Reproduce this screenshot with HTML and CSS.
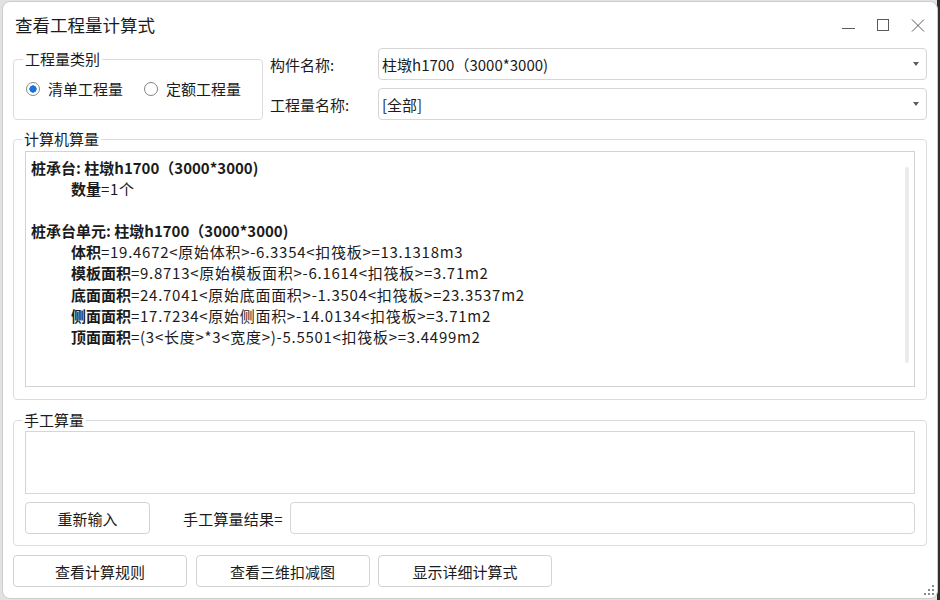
FILE: index.html
```html
<!DOCTYPE html>
<html lang="zh-CN">
<head>
  <meta charset="UTF-8" />
  <title>查看工程量计算式</title>
  <link rel="stylesheet" href="styles.css">
</head>
<body>

<div class="window">
  <div class="titlebar">
    <div class="title">查看工程量计算式</div>
    <div class="controls">
      <span class="ctl">
        <svg width="14" height="14" viewBox="0 0 14 14"><path d="M1 9.5H14" /></svg>
      </span>
      <span class="ctl">
        <svg width="14" height="14" viewBox="0 0 14 14"><rect x="1.5" y="0.5" width="11" height="11" /></svg>
      </span>
      <span class="ctl">
        <svg width="14" height="14" viewBox="0 0 14 14"><path d="M1 0.5L13 12.5M13 0.5L1 12.5" /></svg>
      </span>
    </div>
  </div>

  <div class="content">
    <div class="top-row">
      <fieldset class="group type-group">
        <legend>工程量类别</legend>
        <label class="radio"><input type="radio" name="kind" checked /><span>清单工程量</span></label>
        <label class="radio"><input type="radio" name="kind" /><span>定额工程量</span></label>
      </fieldset>
      <div class="fields">
        <div class="field">
          <span class="field-label">构件名称:</span>
          <div class="combo">
            <span>柱墩h1700（3000*3000)</span>
            <svg width="6" height="4" viewBox="0 0 6 4"><path d="M0 0H6L3 4Z" /></svg>
          </div>
        </div>
        <div class="field">
          <span class="field-label">工程量名称:</span>
          <div class="combo">
            <span>[全部]</span>
            <svg width="6" height="4" viewBox="0 0 6 4"><path d="M0 0H6L3 4Z" /></svg>
          </div>
        </div>
      </div>
    </div>

    <fieldset class="group calc-group">
      <legend>计算机算量</legend>
      <div class="result-box">
        <div class="result-text">
          <div class="line strong">桩承台: 柱墩h1700（3000*3000)</div>
          <div class="line sub"><b>数量</b>=1个</div>
          <div class="line">&nbsp;</div>
          <div class="line strong">桩承台单元: 柱墩h1700（3000*3000)</div>
          <div class="line sub"><b>体积</b>=19.4672&lt;原始体积&gt;-6.3354&lt;扣筏板&gt;=13.1318m3</div>
          <div class="line sub"><b>模板面积</b>=9.8713&lt;原始模板面积&gt;-6.1614&lt;扣筏板&gt;=3.71m2</div>
          <div class="line sub"><b>底面面积</b>=24.7041&lt;原始底面面积&gt;-1.3504&lt;扣筏板&gt;=23.3537m2</div>
          <div class="line sub"><b>侧面面积</b>=17.7234&lt;原始侧面积&gt;-14.0134&lt;扣筏板&gt;=3.71m2</div>
          <div class="line sub"><b>顶面面积</b>=(3&lt;长度&gt;*3&lt;宽度&gt;)-5.5501&lt;扣筏板&gt;=3.4499m2</div>
        </div>
        <div class="scroll-thumb"></div>
      </div>
    </fieldset>

    <fieldset class="group manual-group">
      <legend>手工算量</legend>
      <textarea class="manual-input"></textarea>
      <div class="manual-row">
        <button class="btn reinput">重新输入</button>
        <span class="result-label">手工算量结果=</span>
        <input class="result-input" type="text" />
      </div>
    </fieldset>

    <div class="bottom-buttons">
      <button class="btn">查看计算规则</button>
      <button class="btn">查看三维扣减图</button>
      <button class="btn">显示详细计算式</button>
    </div>
  </div>

  <svg class="grip" width="12" height="12" viewBox="0 0 12 12">
    <rect x="8" y="0" width="2" height="2" />
    <rect x="4" y="4" width="2" height="2" />
    <rect x="8" y="4" width="2" height="2" />
    <rect x="0" y="8" width="2" height="2" />
    <rect x="4" y="8" width="2" height="2" />
    <rect x="8" y="8" width="2" height="2" />
  </svg>
</div>

</body>
</html>
```

FILE: styles.css
```css
html, body {
  margin: 0;
  padding: 0;
  height: 600px;
  overflow: hidden;
}

body {
  font-family: "Noto Sans CJK SC", sans-serif;
  font-size: 15px;
  color: #1b1b1b;
  background: linear-gradient(to right, #e2e2e2 937px, #2e2e2e 937px);
}

.window {
  position: relative;
  box-sizing: border-box;
  width: 936px;
  height: 598px;
  margin: 1px 0 0 2px;
  border: 1px solid #cdcdcd;
  border-radius: 8px;
  background: #ffffff;
}

.titlebar {
  display: flex;
  align-items: center;
  justify-content: space-between;
  height: 46px;
  padding: 0 2px 0 12px;
}

.title {
  font-size: 17.5px;
  line-height: 46px;
}

.controls {
  display: flex;
}

.ctl {
  display: flex;
  justify-content: center;
  width: 35px;
  padding-top: 1px;
}

.ctl svg {
  fill: none;
  stroke: #5a5a5a;
  stroke-width: 1;
}

.content {
  padding: 0 10px;
}

.group {
  margin: 0;
  border: 1px solid #dcdcdc;
  border-radius: 4px;
}

.group legend {
  padding: 0 2px;
  margin-left: -3px;
  line-height: 16px;
  font-size: 15px;
}

/* top row */
.top-row {
  display: flex;
  align-items: flex-start;
}

.type-group {
  box-sizing: border-box;
  width: 250px;
  margin-top: 3px;
  padding: 12px 0 20px 12px;
  display: flex;
  align-items: center;
}

.radio {
  display: flex;
  align-items: center;
  flex-shrink: 0;
  line-height: 20px;
  margin-right: 21px;
  white-space: nowrap;
}

.radio input {
  appearance: none;
  -webkit-appearance: none;
  box-sizing: border-box;
  width: 14px;
  height: 14px;
  margin: 0 8px 0 0;
  border: 1px solid #858585;
  border-radius: 50%;
  background: #fff;
}

.radio input:checked {
  border-color: #8a8a8a;
  background: radial-gradient(circle, #1a73d9 0 3.4px, #fff 3.9px);
}

.fields {
  flex: 1;
  display: flex;
  flex-direction: column;
  gap: 8px;
  margin-left: 7px;
}

.field {
  display: flex;
  align-items: center;
}

.field-label {
  width: 108px;
  flex-shrink: 0;
}

.combo {
  flex: 1;
  box-sizing: border-box;
  height: 32px;
  display: flex;
  align-items: center;
  justify-content: space-between;
  padding: 0 7px 0 3px;
  border: 1px solid #d6d6d6;
  border-radius: 4px;
  background: #fff;
}

.combo svg {
  fill: #5c5c5c;
}

/* calculation result */
.calc-group {
  margin-top: 11px;
  padding: 4px 11px 12px 11px;
}

.result-box {
  box-sizing: border-box;
  height: 236px;
  display: flex;
  border: 1px solid #d2d2d2;
  background: #fff;
}

.result-text {
  flex: 1;
  padding: 5px 0 0 5px;
}

.line {
  line-height: 21.1px;
  white-space: nowrap;
}

.line.strong,
.line b {
  font-weight: bold;
}

.line.sub {
  padding-left: 40px;
  letter-spacing: 0.72px;
}

.line.sub b {
  letter-spacing: 0;
}

.scroll-thumb {
  width: 4px;
  margin: 15px 5px 23px 0;
  border-radius: 2px;
  background: #ebebeb;
}

/* manual input */
.manual-group {
  margin-top: 12px;
  padding: 3px 11px 11px 11px;
}

.manual-input {
  display: block;
  box-sizing: border-box;
  width: 100%;
  height: 63px;
  margin: 0;
  border: 1px solid #d6d6d6;
  resize: none;
  outline: none;
}

.manual-row {
  display: flex;
  align-items: center;
  margin-top: 8px;
}

.btn {
  box-sizing: border-box;
  height: 32px;
  font-family: "Noto Sans CJK SC", sans-serif;
  font-size: 15px;
  color: #1b1b1b;
  background: #ffffff;
  border: 1px solid #d3d3d3;
  border-radius: 4px;
  padding: 0;
}

.reinput {
  width: 125px;
}

.result-label {
  margin: 0 7px 0 33px;
  letter-spacing: 0.2px;
}

.result-input {
  flex: 1;
  box-sizing: border-box;
  height: 32px;
  margin: 0;
  border: 1px solid #d6d6d6;
  border-radius: 4px;
  outline: none;
}

.bottom-buttons {
  display: flex;
  gap: 8.5px;
  margin-top: 9px;
}

.bottom-buttons .btn {
  width: 174px;
}

.grip {
  position: absolute;
  right: 1px;
  bottom: 1px;
  fill: #8a8a8a;
}
```
